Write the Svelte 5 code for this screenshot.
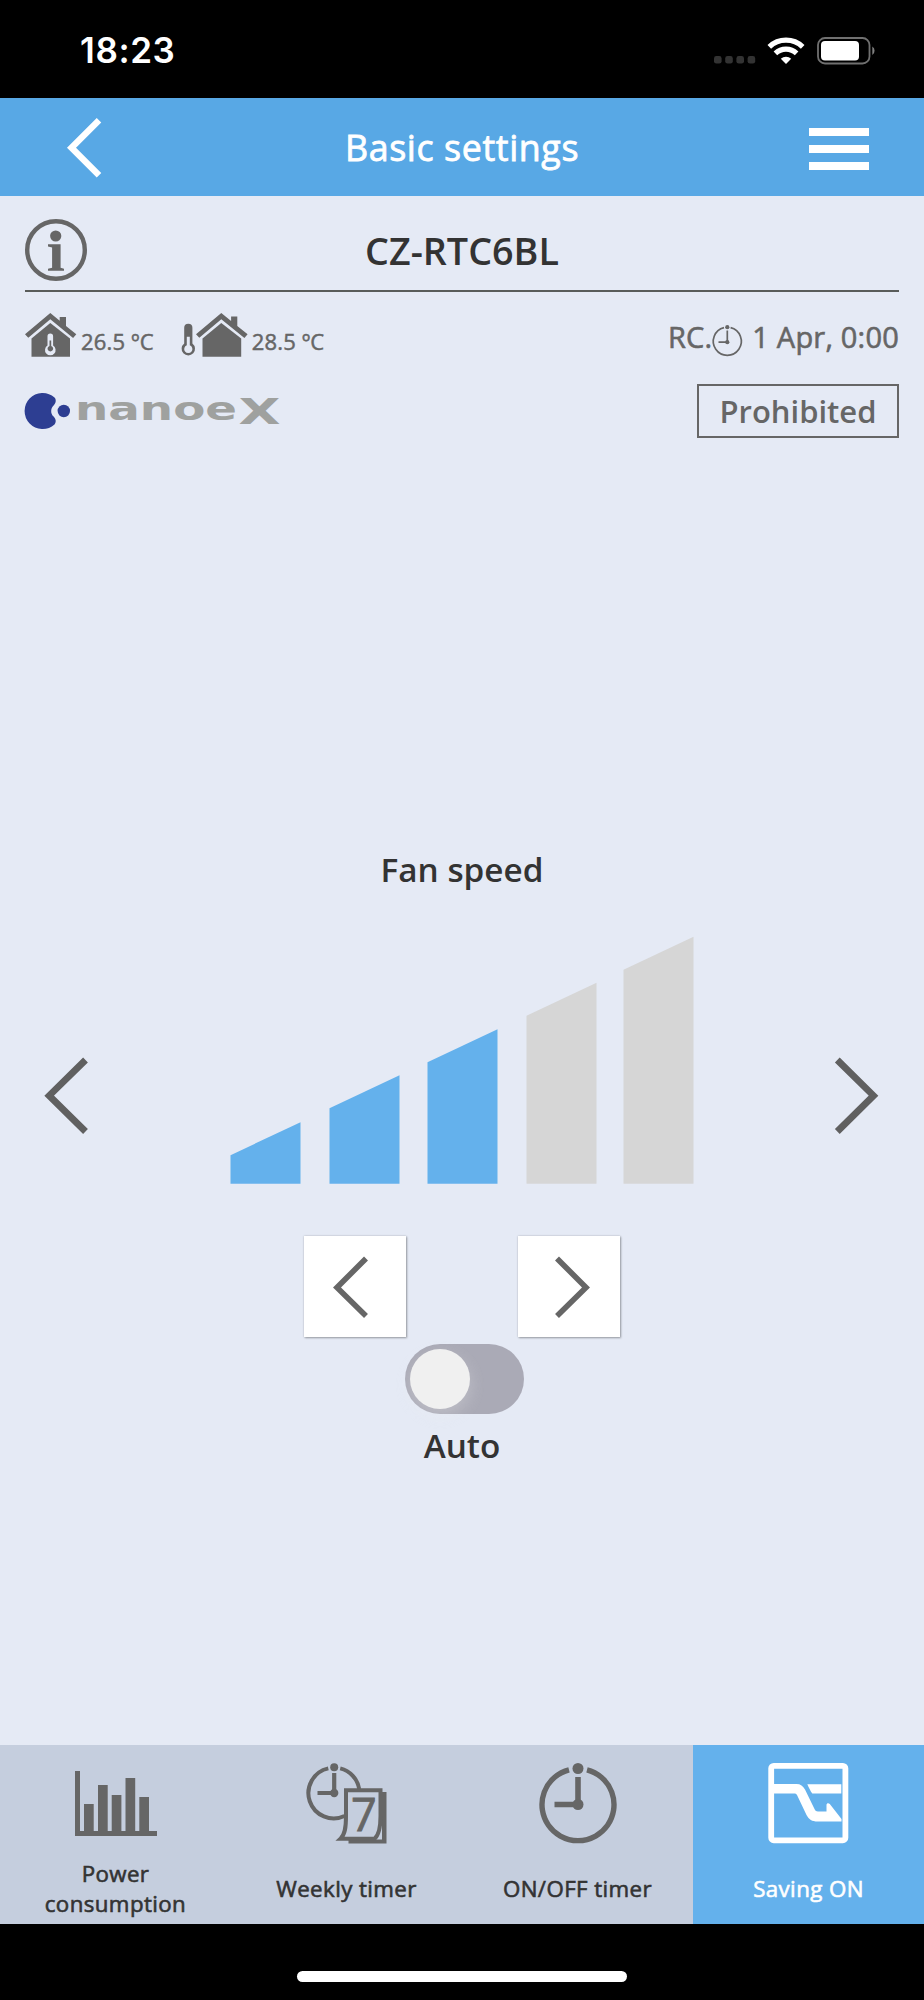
<script lang="ts">
  interface Props {
    time?: string;
    title?: string;
    device?: string;
    indoor?: string;
    outdoor?: string;
    clock?: string;
    level?: number;
    auto?: boolean;
  }

  let {
    time = '18:23',
    title = 'Basic settings',
    device = 'CZ-RTC6BL',
    indoor = '26.5 ºC',
    outdoor = '28.5 ºC',
    clock = '1 Apr, 0:00',
    level = $bindable(3),
    auto = $bindable(false)
  }: Props = $props();

  // left edge and height of the right side of every fan bar
  const bars = [
    { x: 0.5, h: 61.5 },
    { x: 99.5, h: 108.5 },
    { x: 197.5, h: 154.5 },
    { x: 296.5, h: 201 },
    { x: 393.5, h: 247 }
  ];

  const tabs = [
    { id: 'power', label: 'Power consumption' },
    { id: 'weekly', label: 'Weekly timer' },
    { id: 'onoff', label: 'ON/OFF timer' },
    { id: 'saving', label: 'Saving ON' }
  ];

  let active = $state('saving');

  function step(n: number) {
    level = Math.min(bars.length, Math.max(1, level + n));
  }
</script>

<div class="screen">
  <div class="status">
    <span class="time">{time}</span>
    <div class="status-icons">
      <svg class="dots" width="42" height="8" viewBox="0 0 42 8" fill="#333">
        {#each [0, 11.2, 22.4, 33.6] as x}
          <rect {x} y="0" width="7.6" height="7.6" rx="2.4" />
        {/each}
      </svg>
      <svg class="wifi" width="38" height="28" viewBox="0 0 38 28" fill="none" stroke="#fff" stroke-width="5.2">
        <path d="M2.3 9.9a24.2 24.2 0 0 1 33.4 0" />
        <path d="M8.4 16.3a15.4 15.4 0 0 1 21.2 0" />
        <path d="M13.8 21.8a7.6 7.6 0 0 1 10.4 0L19 27z" fill="#fff" stroke="none" />
      </svg>
      <svg class="battery" width="60" height="28" viewBox="0 0 60 28">
        <rect x="1" y="1" width="51.5" height="25.5" rx="7" fill="none" stroke="#707070" stroke-width="1.8" />
        <rect x="4" y="4" width="38" height="19.5" rx="4" fill="#fff" />
        <path d="M55.3 9.5a5.2 5.2 0 0 1 0 8.6z" fill="#808080" />
      </svg>
    </div>
  </div>

  <header class="nav">
    <button class="back" aria-label="Back">
      <svg width="36" height="62" viewBox="0 0 36 62" fill="none" stroke="#fff" stroke-width="6.4">
        <path d="M33 3.3 5.5 30.8 33 58.3" />
      </svg>
    </button>
    <h1>{title}</h1>
    <button class="menu" aria-label="Menu">
      <span></span>
      <span></span>
      <span></span>
    </button>
  </header>

  <main>
    <div class="device">
      <svg width="63" height="63" viewBox="0 0 63 63">
        <circle cx="31" cy="31" r="28.8" fill="none" stroke="#666" stroke-width="4.4" />
        <circle cx="30.7" cy="17" r="5.6" fill="#666" />
        <path d="M23 25.3h12.6v23.4l3.4 1v2.1H23v-2.1l4.1-1V28.5l-4.1-1z" fill="#666" />
      </svg>
      <h2>{device}</h2>
    </div>

    <div class="info">
      <svg class="house" width="52" height="44" viewBox="0 0 52 44" fill="#666">
        <path d="M0 21.2 25.3 0l9.4 7.7V4h6.3v9l10.3 8.3-3.2 3.6L25.3 6.2 3.3 24.8z" />
        <path d="M25.3 10 6.5 25.5v18.2H45V25.5z" />
        <path d="M22.5 32.5v-9.3a2.8 2.8 0 0 1 5.6 0v9.3a5.3 5.3 0 1 1-5.6 0z" fill="#e5eaf5" />
        <path d="M24.5 33v-5.5h1.7V33a2.8 2.8 0 1 1-1.7 0z" />
      </svg>
      <span class="temp">{indoor}</span>
      <svg class="thermo" width="15" height="34" viewBox="0 0 15 34">
        <path d="M3.2 20.5V4.8a4.1 4.1 0 0 1 8.2 0v15.7a6.7 6.7 0 1 1-8.2 0z" fill="#666" />
        <path d="M5.8 13.8h3v8.4a4.1 4.1 0 1 1-3 0z" fill="#e5eaf5" />
      </svg>
      <svg class="house" width="52" height="44" viewBox="0 0 52 44" fill="#666">
        <path d="M0 21.2 25.3 0l9.8 8V3.4h6.2V13l10.3 8.3-3.2 3.6L25.3 6.2 3.3 24.8z" />
        <path d="M25.3 10 6.5 25.5v18.2H45.2V25.5z" />
      </svg>
      <span class="temp">{outdoor}</span>
      <div class="rc">
        <span class="rc-label">RC.</span>
        <svg width="31" height="32" viewBox="0 0 31 32">
          <path d="M12 2.7a14 14 0 1 0 6.6 0" fill="none" stroke="#666" stroke-width="1.7" />
          <path d="M15.3 5.5v11.7H6.5" fill="none" stroke="#666" stroke-width="1.7" />
          <circle cx="15.3" cy="2.2" r="2.1" fill="#666" />
          <circle cx="15.3" cy="17.2" r="2.1" fill="#666" />
        </svg>
        <span class="rc-time">{clock}</span>
      </div>
    </div>

    <div class="mode">
      <svg class="logo" width="262" height="37" viewBox="0 0 262 37">
        <path
          d="M29.5 4.5A18 18 0 1 0 29.5 31.5C31.5 29.3 31 26 28.6 23.6 25.4 21 25.4 15.5 28.6 12.6 31 10 31.5 6.7 29.5 4.5z"
          fill="#2d3e92"
        />
        <circle cx="38.8" cy="18" r="6.2" fill="#2d3e92" />
        <text class="nanoe" x="50" y="27" textLength="162" lengthAdjust="spacingAndGlyphs">nanoe</text>
        <text class="x" x="213.5" y="31.2" textLength="42" lengthAdjust="spacingAndGlyphs">X</text>
      </svg>
      <span class="badge">Prohibited</span>
    </div>

    <h3>Fan speed</h3>
    <div class="stage">
      <button class="page" aria-label="Previous setting">
        <svg width="44" height="78" viewBox="0 0 44 78" fill="none" stroke="#606060" stroke-width="6.8">
          <path d="M41.5 3 5.2 38.7 41.5 74.5" />
        </svg>
      </button>
      <svg class="fan" width="464" height="248" viewBox="0 0 464 248">
        {#each bars as bar, i}
          <path
            class:on={i < level}
            d="M{bar.x} 247.7V{247.7 - bar.h + 33}L{bar.x + 70} {247.7 - bar.h}V247.7z"
          />
        {/each}
      </svg>
      <button class="page" aria-label="Next setting">
        <svg width="44" height="78" viewBox="0 0 44 78" fill="none" stroke="#606060" stroke-width="6.8">
          <path d="M1.3 3 37.5 38.7 1.3 74.5" />
        </svg>
      </button>
    </div>

    <div class="steps">
      <button class="step" aria-label="Slower" onclick={() => step(-1)}>
        <svg width="102" height="102" viewBox="0 0 102 102" fill="none" stroke="#666" stroke-width="5.6">
          <path d="M62 22.5 33 51.5 62 80" />
        </svg>
      </button>
      <button class="step" aria-label="Faster" onclick={() => step(1)}>
        <svg width="102" height="102" viewBox="0 0 102 102" fill="none" stroke="#666" stroke-width="5.6">
          <path d="M39 22.5 68 51.5 39 80" />
        </svg>
      </button>
    </div>

    <button class="toggle" class:checked={auto} aria-label="Auto" onclick={() => (auto = !auto)}>
      <span class="knob"></span>
    </button>
    <span class="auto">Auto</span>
  </main>

  <nav class="tabs">
    {#each tabs as tab}
      <button class="tab" class:active={active === tab.id} onclick={() => (active = tab.id)}>
        <svg width="82" height="82" viewBox="0 0 82 82" fill="#666">
          {#if tab.id === 'power'}
            <path d="M0 8h5v60h77v5H0z" />
            <path d="M9 41h9.7v28H9zM23 22h9.7v47H23zM36.7 32h9.7v37h-9.7zM50.5 15h9.7v54h-9.7zM64.3 34H74v35h-9.7z" />
          {:else if tab.id === 'weekly'}
            <path
              d="M38.5 53A25.3 25.3 0 1 1 22.3 5.4M34.2 5.4A25.3 25.3 0 0 1 53.2 26"
              fill="none"
              stroke="#666"
              stroke-width="4"
            />
            <path d="M28.2 10v20H11.5" fill="none" stroke="#666" stroke-width="4.2" />
            <circle cx="28.2" cy="4.2" r="4" />
            <circle cx="28.2" cy="30" r="4.2" />
            <path d="M76 29h4.5v51.5h-38v-4H76z" />
            <path
              d="M40 27.3h34.5V53c0 10-1.5 19-6 22.7H34.5C39 71.5 40 64.5 40 53z"
              fill="#c5cede"
              stroke="#666"
              stroke-width="4"
            />
            <text class="seven" x="45" y="68">7</text>
          {:else if tab.id === 'onoff'}
            <path d="M32 6.8a36 36 0 1 0 18 0" fill="none" stroke="#666" stroke-width="5.4" />
            <path d="M41 14v27.5H17.5" fill="none" stroke="#666" stroke-width="5.6" />
            <circle cx="41" cy="5.5" r="5.5" />
            <circle cx="41" cy="41.5" r="5.5" />
          {:else}
            <rect x="3.2" y="2.8" width="74.2" height="74.5" rx="2.5" fill="none" stroke="#fff" stroke-width="5.8" />
            <path
              d="M4 21h24.5c4 0 6.5 2 8.5 5.5L46.5 46c1 1.8 1.8 2.5 3.5 2.5h8.5V42c0-2 2-2.5 3.3-1L73.5 56v2.5h-24c-5.5 0-8.5-2-11-6.5L29 32c-.8-1.500-1.500-1.500-3-1.500H4z"
              fill="#fff"
            />
            <path d="M39.3 21.3h34v9.2h-29c-2-2.500-3.500-6-5-9.200z" fill="#fff" />
          {/if}
        </svg>
        <span class="label">{tab.label}</span>
      </button>
    {/each}
  </nav>

  <div class="home"><span></span></div>
</div>

<style>
  :global(body) {
    margin: 0;
    background: #000;
  }

  .screen {
    display: flex;
    flex-direction: column;
    width: 924px;
    height: 2000px;
    overflow: hidden;
    background: #e5eaf5;
    color: #333;
    font-family: 'Open Sans', 'Noto Sans', sans-serif;
    font-weight: 400;
    white-space: nowrap;
  }

  svg {
    display: block;
    flex: none;
    overflow: visible;
  }

  button {
    padding: 0;
    border: none;
    background: none;
    color: inherit;
    font: inherit;
  }

  h1,
  h2,
  h3 {
    margin: 0;
    font-weight: 600;
  }

  .status {
    display: flex;
    justify-content: space-between;
    box-sizing: border-box;
    height: 98px;
    padding: 0 47px 0 80px;
    background: #000;
    color: #fff;
  }

  .time {
    font-family: Inter, sans-serif;
    font-size: 35px;
    font-weight: 600;
    line-height: 101px;
    letter-spacing: 0.6px;
  }

  .status-icons {
    display: flex;
    padding-top: 37px;
  }

  .dots {
    margin-top: 19px;
  }

  .wifi {
    margin-left: 11px;
  }

  .battery {
    margin-left: 12px;
  }

  .nav {
    display: flex;
    align-items: center;
    justify-content: space-between;
    box-sizing: border-box;
    height: 98px;
    padding: 0 55px 0 66px;
    background: #58a8e5;
    color: #fff;
  }

  .back {
    width: 49px;
    padding-top: 2px;
  }

  h1 {
    font-size: 35.8px;
    font-weight: 400;
    letter-spacing: 0.6px;
    -webkit-text-stroke: 0.8px currentColor;
  }

  .menu {
    display: flex;
    flex-direction: column;
    gap: 9px;
    width: 60px;
    padding-top: 3px;
  }

  .menu span {
    height: 8px;
    background: #fff;
  }

  main {
    display: flex;
    flex: 1;
    flex-direction: column;
    align-items: center;
    padding: 1px 25px 0;
  }

  .device {
    display: grid;
    grid-template-columns: 63px 1fr 63px;
    align-items: center;
    box-sizing: border-box;
    width: 100%;
    height: 95px;
    padding-top: 13px;
    border-bottom: 2px solid #595c5a;
  }

  h2 {
    font-size: 37.7px;
    text-align: center;
  }

  .info {
    display: flex;
    align-items: flex-end;
    width: 100%;
    height: 65px;
    color: #666;
  }

  .temp {
    margin-left: 4px;
    font-size: 22px;
    line-height: 31px;
    letter-spacing: 0.2px;
    -webkit-text-stroke: 0.5px currentColor;
  }

  .thermo {
    margin-left: 27px;
  }

  .rc {
    display: flex;
    align-items: flex-end;
    margin-left: auto;
    font-size: 29px;
    line-height: 40px;
    letter-spacing: 0.2px;
    -webkit-text-stroke: 0.6px currentColor;
  }

  .rc-time {
    margin-left: 9px;
  }

  .mode {
    display: flex;
    align-items: center;
    justify-content: space-between;
    width: 100%;
    margin-top: 27px;
  }

  .logo text {
    fill: #9fa19f;
    font-family: 'DejaVu Sans', sans-serif;
    font-weight: 700;
  }

  .logo .nanoe {
    font-size: 32px;
  }

  .logo .x {
    font-size: 35px;
  }

  .badge {
    box-sizing: border-box;
    width: 202px;
    border: 2px solid #666;
    color: #666;
    font-size: 31px;
    font-weight: 600;
    line-height: 50px;
    text-align: center;
  }

  h3,
  .auto {
    font-size: 33.3px;
    font-weight: 600;
    line-height: 46px;
  }

  h3 {
    margin-top: 408px;
  }

  .stage {
    display: flex;
    align-items: flex-end;
    justify-content: space-between;
    box-sizing: border-box;
    width: 100%;
    margin-top: 44px;
    padding: 0 19px;
  }

  .page {
    margin-bottom: 49px;
  }

  .fan path {
    fill: #d6d6d6;
  }

  .fan path.on {
    fill: #64b1ec;
  }

  .steps {
    display: flex;
    gap: 112px;
    margin-top: 52px;
  }

  .step {
    width: 102px;
    height: 101px;
    background: #fff;
    box-shadow:
      0 0 2px rgba(0, 0, 0, 0.2),
      1px 1px 2px rgba(0, 0, 0, 0.3);
  }

  .toggle {
    display: flex;
    box-sizing: border-box;
    width: 119px;
    height: 70px;
    margin: 7px 0 0 5px;
    padding: 5px;
    border-radius: 35px;
    background: #aaaab6;
  }

  .toggle.checked {
    justify-content: flex-end;
    background: #64b1ec;
  }

  .knob {
    width: 60px;
    height: 60px;
    border-radius: 50%;
    background: #f0f0f0;
    box-shadow: 0 6px 16px rgba(240, 240, 240, 0.3);
  }

  .auto {
    margin-top: 8px;
  }

  .tabs {
    display: grid;
    grid-template-columns: repeat(4, 1fr);
    height: 179px;
    background: #c5cede;
  }

  .tab {
    display: flex;
    flex-direction: column;
    align-items: center;
    padding-top: 18px;
    color: #333;
    font-size: 22.3px;
    line-height: 30px;
    letter-spacing: 0.4px;
  }

  .tab.active {
    background: #64b1ec;
    color: #fff;
  }

  .label {
    display: flex;
    align-items: center;
    justify-content: center;
    width: 170px;
    height: 60px;
    margin-top: 14px;
    white-space: normal;
    -webkit-text-stroke: 0.6px currentColor;
  }

  .seven {
    font-family: 'Open Sans', sans-serif;
    font-size: 45px;
    stroke: #666;
    stroke-width: 0.8px;
  }

  .home {
    display: flex;
    align-items: flex-start;
    justify-content: center;
    box-sizing: border-box;
    height: 76px;
    padding-top: 47px;
    background: #000;
  }

  .home span {
    width: 330px;
    height: 11px;
    border-radius: 6px;
    background: #fff;
  }
</style>
